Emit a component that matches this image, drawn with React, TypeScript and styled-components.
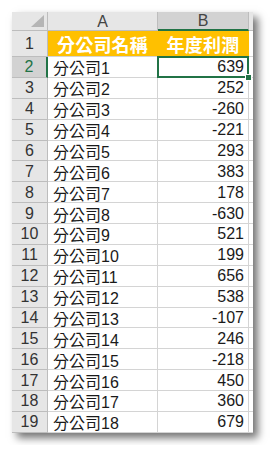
import React from "react";
import styled, { createGlobalStyle } from "styled-components";

const GlobalStyle = createGlobalStyle`
  html, body {
    margin: 0;
    padding: 0;
    background: #ffffff;
  }
  body {
    font-family: "Liberation Sans", "Noto Sans CJK TC", sans-serif;
  }
`;

const Page = styled.div`
  padding: 12px;
`;

const Sheet = styled.div`
  display: grid;
  grid-template-columns: 36px 110px 91px 4px;
  grid-template-rows: 19px 26px repeat(18, 20.875px);
  width: max-content;
  background: #ffffff;
  box-shadow: 5px 5px 8px rgba(0, 0, 0, 0.55);
`;

const Corner = styled.div`
  position: relative;
  background: #e6e6e6;
  border-right: 1px solid #bdbdbd;
  border-bottom: 1px solid #bdbdbd;
  box-sizing: border-box;
  &::after {
    content: "";
    position: absolute;
    right: 3px;
    bottom: 3px;
    width: 0;
    height: 0;
    border-left: 13px solid transparent;
    border-bottom: 12px solid #b5b5b5;
  }
`;

const ColHeader = styled.div<{ $active?: boolean }>`
  display: flex;
  align-items: center;
  justify-content: center;
  box-sizing: border-box;
  background: ${(p) => (p.$active ? "#d2d2d2" : "#e6e6e6")};
  border-right: 1px solid #bdbdbd;
  border-bottom: ${(p) => (p.$active ? "2px solid #217346" : "1px solid #bdbdbd")};
  color: #444444;
  font-size: 16px;
  padding-top: 1px;
`;

const RowHeader = styled.div<{ $active?: boolean }>`
  display: flex;
  align-items: center;
  justify-content: center;
  box-sizing: border-box;
  background: ${(p) => (p.$active ? "#d2d2d2" : "#e6e6e6")};
  border-right: ${(p) => (p.$active ? "2px solid #217346" : "1px solid #bdbdbd")};
  border-bottom: 1px solid #bdbdbd;
  color: ${(p) => (p.$active ? "#217346" : "#333333")};
  font-size: 16px;
  padding-top: 1px;
`;

const TitleCell = styled.div`
  display: flex;
  align-items: center;
  justify-content: center;
  box-sizing: border-box;
  background: #ffc000;
  border-right: 1px solid #ffc000;
  border-bottom: 1px solid #d4d4d4;
  color: #ffffff;
  font-size: 18px;
  font-weight: bold;
  letter-spacing: 0.2px;
`;

const Cell = styled.div<{ $num?: boolean; $selected?: boolean }>`
  position: relative;
  display: flex;
  align-items: center;
  justify-content: ${(p) => (p.$num ? "flex-end" : "flex-start")};
  box-sizing: border-box;
  padding: 1px 4px 0 5px;
  border-right: 1px solid #d4d4d4;
  border-bottom: 1px solid #d4d4d4;
  color: #1a1a1a;
  font-size: 16px;
  white-space: nowrap;
  ${(p) =>
    p.$selected &&
    `
    &::before {
      content: "";
      position: absolute;
      left: -1px;
      top: -1px;
      right: -1px;
      bottom: -1px;
      border: 2px solid #217346;
    }
    &::after {
      content: "";
      position: absolute;
      right: -4px;
      bottom: -4px;
      width: 5px;
      height: 5px;
      background: #217346;
      border: 1px solid #ffffff;
      z-index: 1;
    }
  `}
`;

const Spare = styled.div<{ $head?: boolean }>`
  box-sizing: border-box;
  background: ${(p) => (p.$head ? "#e6e6e6" : "#ffffff")};
  border-bottom: 1px solid ${(p) => (p.$head ? "#bdbdbd" : "#d4d4d4")};
`;

const rows: [string, number][] = [
  ["分公司1", 639],
  ["分公司2", 252],
  ["分公司3", -260],
  ["分公司4", -221],
  ["分公司5", 293],
  ["分公司6", 383],
  ["分公司7", 178],
  ["分公司8", -630],
  ["分公司9", 521],
  ["分公司10", 199],
  ["分公司11", 656],
  ["分公司12", 538],
  ["分公司13", -107],
  ["分公司14", 246],
  ["分公司15", -218],
  ["分公司16", 450],
  ["分公司17", 360],
  ["分公司18", 679],
];

export default function App() {
  return (
    <Page>
      <GlobalStyle />
      <Sheet>
        <Corner />
        <ColHeader>A</ColHeader>
        <ColHeader $active>B</ColHeader>
        <Spare $head />

        <RowHeader>1</RowHeader>
        <TitleCell>分公司名稱</TitleCell>
        <TitleCell>年度利潤</TitleCell>
        <Spare />

        {rows.map(([name, value], i) => (
          <React.Fragment key={name}>
            <RowHeader $active={i === 0}>{i + 2}</RowHeader>
            <Cell>{name}</Cell>
            <Cell $num $selected={i === 0}>
              {value}
            </Cell>
            <Spare />
          </React.Fragment>
        ))}
      </Sheet>
    </Page>
  );
}
